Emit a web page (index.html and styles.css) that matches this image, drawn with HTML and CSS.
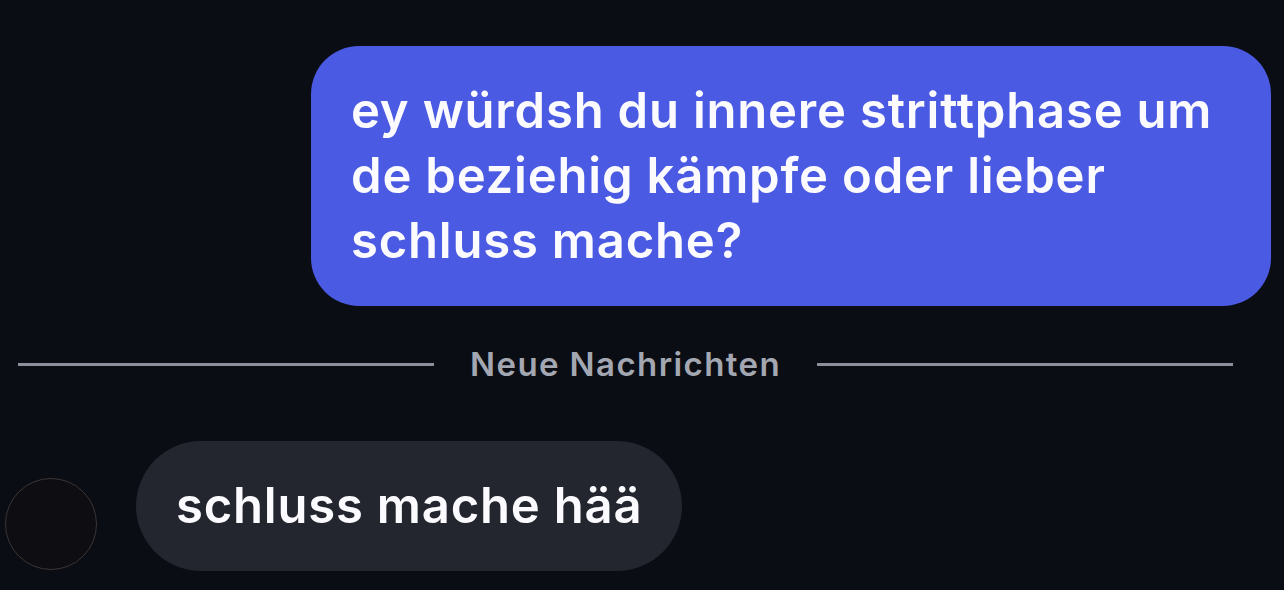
FILE: index.html
```html
<!DOCTYPE html>
<html lang="de">
<head>
<meta charset="utf-8">
<link rel="stylesheet" href="styles.css">
</head>
<body>
<main class="chat">
  <div class="row row-out">
    <div class="bubble bubble-out">ey würdsh du innere strittphase um de beziehig kämpfe oder lieber schluss mache?</div>
  </div>
  <div class="divider">
    <span class="line"></span>
    <span class="divider-text">Neue Nachrichten</span>
    <span class="line"></span>
  </div>
  <div class="row row-in">
    <div class="avatar"></div>
    <div class="bubble bubble-in">schluss mache hää</div>
  </div>
</main>
</body>
</html>
```
FILE: styles.css
```css
html, body {
  margin: 0;
  padding: 0;
  background: #0b0d15;
  height: 100%;
  overflow: hidden;
}
.chat {
  display: flex;
  flex-direction: column;
  font-family: Inter, "Liberation Sans", sans-serif;
  padding-top: 46px;
}
.row {
  display: flex;
}
.row-out {
  justify-content: flex-end;
  padding-right: 13px;
}
.bubble {
  color: #fbfbff;
  font-size: 49px;
  font-weight: 600;
  line-height: 65px;
  box-sizing: border-box;
  letter-spacing: 0.8px;
}
.bubble-out {
  background: #4b5ae2;
  border-radius: 48px;
  width: 960px;
  padding: 32px 40px 33px 40px;
}
.divider {
  display: flex;
  align-items: center;
  margin-top: 38px;
  padding: 0 51px 0 18px;
  gap: 36px;
}
.line {
  flex: 1;
  height: 3px;
  background: #8b8f99;
}
.divider-text {
  color: #a3a7b1;
  font-size: 33px;
  font-weight: 600;
  line-height: 40px;
  letter-spacing: 1.4px;
}
.row-in {
  align-items: flex-end;
  margin-top: 57px;
  padding-left: 5px;
  gap: 39px;
}
.avatar {
  width: 90px;
  height: 90px;
  border-radius: 50%;
  background: #0e0e12;
  border: 1.5px solid #3b3535;
  margin-bottom: 1px;
}
.bubble-in {
  background: #23262e;
  border-radius: 65px;
  padding: 32px 40px 33px 40px;
}
```
